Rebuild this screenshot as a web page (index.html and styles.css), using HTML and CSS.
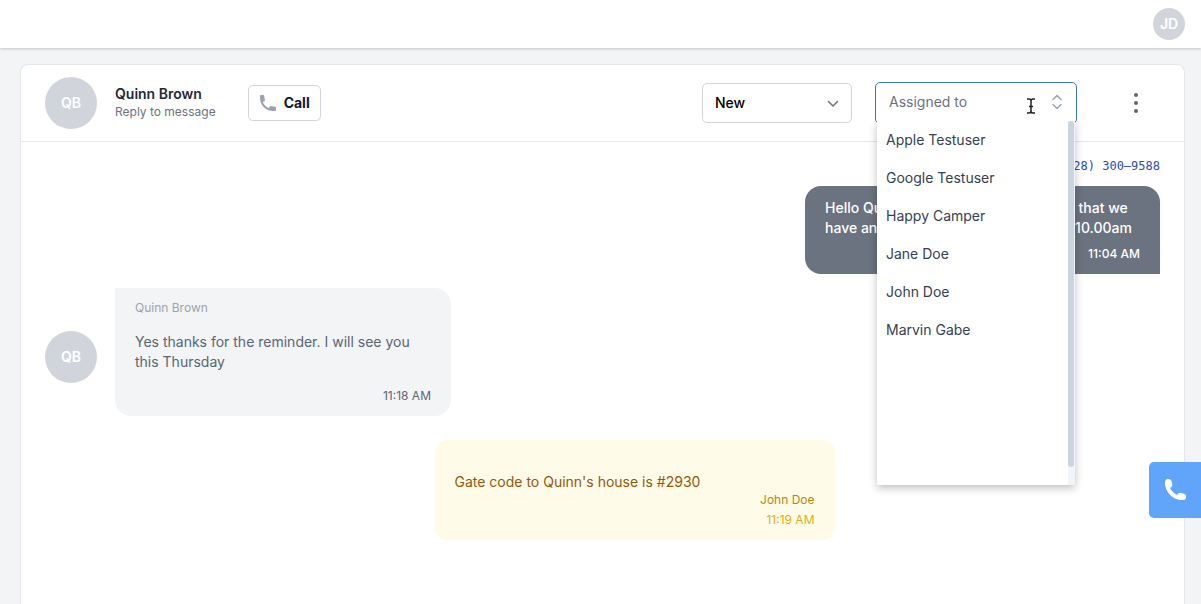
FILE: index.html
```html
<!DOCTYPE html>
<html lang="en">
<head>
  <meta charset="utf-8">
  <title>Quinn Brown - Messages</title>
  <meta name="viewport" content="width=device-width, initial-scale=1.0">
  <link rel="stylesheet" href="styles.css">
</head>
<body>
  <header class="topbar">
    <button class="avatar avatar-small" type="button" aria-label="Account">JD</button>
  </header>

  <main class="card">
    <div class="card-header">
      <div class="avatar">QB</div>
      <div class="contact">
        <h1>Quinn Brown</h1>
        <p>Reply to message</p>
      </div>
      <button class="call-btn" type="button">
        <svg width="18" height="18" viewBox="1 1 18 18" aria-hidden="true">
          <path fill="#9ca3af" d="M2 3a1 1 0 0 1 1-1h2.2a1 1 0 0 1 1 .8l.7 4.5a1 1 0 0 1-.5 1l-1.6.8a11 11 0 0 0 6.1 6.1l.8-1.6a1 1 0 0 1 1-.5l4.5.7a1 1 0 0 1 .8 1V17a1 1 0 0 1-1 1h-2C7.800 18 2 12.200 2 5V3z"/>
        </svg>
        Call
      </button>

      <div class="actions">
        <div class="status">
          <select aria-label="Status">
            <option>New</option>
            <option>Open</option>
            <option>Closed</option>
          </select>
          <svg class="chevron" width="12" height="8" viewBox="0 0 12 8" aria-hidden="true">
            <path d="M1.500 1.500 6 6l4.500-4.500" fill="none" stroke="#6b7280" stroke-width="1.500" stroke-linecap="round" stroke-linejoin="round"/>
          </svg>
        </div>

        <div class="assignee">
          <input type="text" placeholder="Assigned to" aria-label="Assigned to" autocomplete="off">
          <svg class="updown" width="10" height="16" viewBox="0 0 10 16" aria-hidden="true">
            <path d="M1 5.500l4-4 4 4M1 10.500l4 4 4-4" fill="none" stroke="#9ca3af" stroke-width="1.500" stroke-linecap="round" stroke-linejoin="round"/>
          </svg>
          <svg class="cursor" width="10" height="16" viewBox="0 0 10 16" aria-hidden="true">
            <path d="M1 1h2q2 0 2 2v10q0 2-2 2H1M9 1H7Q5 1 5 3M5 13q0 2 2 2h2M3 8.500h4" fill="none" stroke="#222" stroke-width="1.500"/>
          </svg>
          <div class="menu">
            <ul>
              <li>Apple Testuser</li>
              <li>Google Testuser</li>
              <li>Happy Camper</li>
              <li>Jane Doe</li>
              <li>John Doe</li>
              <li>Marvin Gabe</li>
            </ul>
            <div class="track"><div class="thumb"></div></div>
          </div>
        </div>

        <button class="more-btn" type="button" aria-label="More options">
          <svg width="6" height="20" viewBox="0 0 6 20" aria-hidden="true">
            <g fill="#636669"><circle cx="3" cy="2" r="2"/><circle cx="3" cy="10" r="2"/><circle cx="3" cy="18" r="2"/></g>
          </svg>
        </button>
      </div>
    </div>

    <div class="messages">
      <a class="phone" href="tel:+16283009588">(628) 300–9588</a>

      <div class="bubble sent">
        <p>Hello Quinn. This is a gentle reminder that we have an appointment for Thursday at 10.00am</p>
        <time>11:04 AM</time>
      </div>

      <div class="received-row">
        <div class="avatar">QB</div>
        <div class="bubble received">
          <span class="author">Quinn Brown</span>
          <p>Yes thanks for the reminder. I will see you this Thursday</p>
          <time>11:18 AM</time>
        </div>
      </div>

      <div class="bubble note">
        <p>Gate code to Quinn's house is #2930</p>
        <span class="author">John Doe</span>
        <time>11:19 AM</time>
      </div>
    </div>
  </main>

  <button class="dialer" type="button" aria-label="Open dialer">
    <svg width="24" height="24" viewBox="0 0 24 24" aria-hidden="true">
      <path fill="none" stroke="#fff" stroke-width="4" d="M4 5c0 8 7 15 15 15"/>
      <path fill="#fff" d="M2 4.500Q2 1 5 1t3.300 1.500l1 4q.3 1.500-1 2.500L6 11Q2 9 2 4.500zM20 22Q23 22 23 19t-1.500-3l-4-1.300q-1.500-.3-2.500 1L13 18Q15 22 20 22z"/>
    </svg>
  </button>
</body>
</html>
```

FILE: styles.css
```css
* { box-sizing: border-box; }
body { margin: 0; min-height: 100vh; display: flex; flex-direction: column; background: #f3f4f6; color: #1f2937; font: 14px/20px Inter, "Liberation Sans", sans-serif; }
h1, p, ul { margin: 0; padding: 0; }
button, input, select { font: inherit; color: inherit; }
button { cursor: pointer; }

.topbar { display: flex; justify-content: flex-end; align-items: center; height: 48px; padding: 0 16px; background: #fff; box-shadow: 0 1px 3px rgba(0, 0, 0, 0.2); }

.avatar { flex: none; display: flex; align-items: center; justify-content: center; width: 52px; height: 52px; border: none; border-radius: 50%; background: #d1d5db; color: #fff; font-weight: 600; }
.avatar-small { width: 32px; height: 32px; padding: 0; }

.card { flex: 1; margin: 16px 16px 0 20px; background: #fff; border: 1px solid #e5e7eb; border-bottom: none; border-radius: 8px 8px 0 0; }
.card-header { display: flex; align-items: center; height: 77px; padding: 0 24px; border-bottom: 1px solid #e5e7eb; }
.contact { margin: 0 32px 0 18px; }
.contact h1 { font-size: 14px; line-height: 18px; font-weight: 600; }
.contact p { font-size: 12px; line-height: 18px; color: #6b7280; }

.call-btn { display: flex; align-items: center; gap: 7px; height: 36px; padding: 0 10px; background: #fff; border: 1px solid #d1d5db; border-radius: 5px; color: #111827; font-weight: 700; }

.actions { display: flex; align-items: center; margin-left: auto; }
.status { position: relative; width: 150px; margin-right: 23px; }
.status select { appearance: none; width: 100%; height: 40px; padding: 0 12px; background: #fff; border: 1px solid #d1d5db; border-radius: 5px; color: #000; font-weight: 500; }
.chevron { position: absolute; right: 13px; top: 17px; pointer-events: none; }

.assignee { position: relative; width: 202px; margin-right: 35px; }
.assignee input { display: block; width: 100%; height: 42px; padding: 0 13px 4px; background: #fff; border: 1px solid #3b76c4; border-radius: 5px; outline: none; }
.assignee input::placeholder { color: #6b7280; }
.updown { position: absolute; right: 15px; top: 12px; }
.cursor { position: absolute; right: 41px; top: 16px; }

.menu { position: absolute; z-index: 2; top: 39px; left: 2px; right: 2px; display: flex; height: 364px; background: #fff; box-shadow: 0 3px 8px rgba(0, 0, 0, 0.25); clip-path: inset(0 -12px -16px -12px); }
.menu ul { flex: 1; list-style: none; }
.menu li { padding: 9px; color: #374151; cursor: pointer; }
.track { width: 7px; background: #f1f4f8; }
.thumb { width: 6px; height: 95%; background: #cbd5e1; border-radius: 3px; }

.more-btn { display: flex; justify-content: center; width: 48px; padding: 8px 0; background: none; border: none; }

.messages { display: flex; flex-direction: column; padding: 16px 24px 0; }
.phone { align-self: flex-end; margin-bottom: 12px; font: 12px/16px "DejaVu Sans Mono", "Liberation Mono", monospace; color: #2a4cb5; text-decoration: none; }
.bubble { display: flex; flex-direction: column; padding: 12px 20px 10px; border-radius: 16px; }
.bubble time { align-self: flex-end; font-size: 12px; line-height: 20px; }

.sent { align-self: flex-end; width: 355px; background: #6b7280; color: #fff; font-weight: 500; border-bottom-right-radius: 0; }
.sent time { margin-top: 6px; }

.received-row { display: flex; align-items: center; gap: 18px; margin-top: 14px; }
.received-row .avatar { margin-top: 10px; }
.received { width: 336px; background: #f3f4f6; color: #596673; border-top-left-radius: 0; }
.received .author { margin-bottom: 16px; font-size: 12px; line-height: 16px; color: #9ca3af; }
.received time { margin-top: 14px; }

/* internal note, centred on the bubble column beside the avatars */
.note { align-self: center; width: 400px; margin: 24px 0 0 64px; padding-top: 34px; border-radius: 12px; background: #fefce8; color: #92590e; }
.note p { line-height: 16px; }
.note .author { align-self: flex-end; font-size: 12px; color: #b8860b; }
.note time { color: #dcb00c; }

.dialer { position: fixed; z-index: 3; right: 0; top: 462px; display: flex; align-items: center; justify-content: center; width: 52px; height: 56px; background: #60a5fa; border: none; border-radius: 5px 0 0 5px; }
```
